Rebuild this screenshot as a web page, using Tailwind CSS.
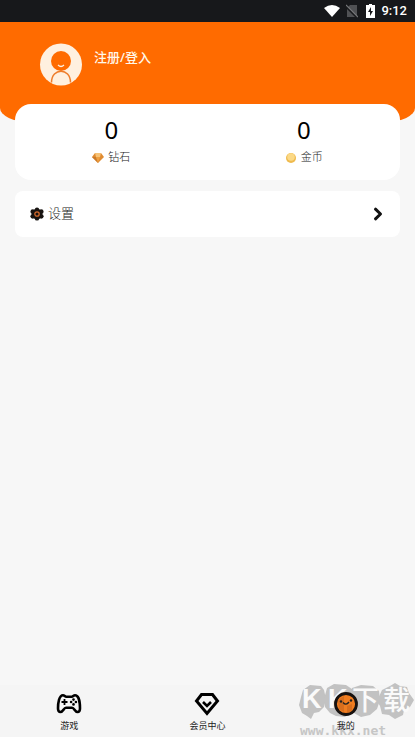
<!DOCTYPE html>
<html lang="zh-CN">
<head>
<meta charset="utf-8">
<meta name="viewport" content="width=device-width, initial-scale=1">
<title>我的</title>
<script src="https://cdn.jsdelivr.net/npm/@tailwindcss/browser@4"></script>
</head>
<body class="min-h-screen flex flex-col bg-[#f7f7f7] font-['Roboto','Noto_Sans_CJK_SC',sans-serif] text-[#222]">
<div class="h-[22px] bg-[#17181b] flex items-center justify-end gap-1.5 pr-2 text-white">
  <svg class="w-4 h-3" viewBox="0 0 16 12"><path fill="#fff" d="M0 3Q8-3 16 3L8 12Z"/></svg>
  <svg class="w-3 h-[14px] mr-0.5" viewBox="0 0 12 14"><path fill="#505154" d="M4 1h7v11L2 3ZM1 5l8 8H1Z"/><path stroke="#77787a" stroke-width="1.2" d="M0 1l12 12"/></svg>
  <svg class="w-[9px] h-[14px]" viewBox="0 0 9 14"><path fill="#fff" d="M3 0h3v1h3v13H0V1h3Z"/><path fill="#17181b" d="M5 3L2 8h2v4l3-5H5Z"/></svg>
  <span class="text-[13px] leading-5 font-medium">9:12</span>
</div>
<header class="bg-[#ff6b00] [border-radius:0_0_30px_30px/0_0_14px_14px] h-[100px] pl-[39px] pt-[21px] flex items-start gap-3">
  <svg class="w-[43px] h-[43px]" viewBox="0 0 43 43"><circle cx="22" cy="21.5" r="21" fill="#fff0df"/><circle cx="22" cy="18" r="10" fill="#ff6b00"/><path d="M12.500 39.500c0-15 19-15 19 0" fill="#fff0df" stroke="#ee7d2b" stroke-width="1.500"/><path d="M19 22q3 3 6 0" fill="none" stroke="#fff0df" stroke-width="1.200"/></svg>
  <a href="#" class="font-['Noto_Sans','Noto_Sans_CJK_SC',sans-serif] text-[13px] leading-5 font-medium text-[#fff8ea] mt-1">注册/登入</a>
</header>
<main class="flex-1 px-[15px] -mt-[18px]">
  <section class="h-[76px] bg-white rounded-2xl grid grid-cols-2 text-center pt-3">
    <div><div class="font-['Noto_Sans'] text-2xl leading-7 text-black">0</div>
      <div class="flex items-center justify-center gap-1 mt-1 text-[11px] leading-5 font-light"><svg class="w-3 h-3" viewBox="0 0 12 12"><path fill="#e08b30" d="M3 1h6l3 4-6 6L0 5Z"/><path fill="#f6c276" d="M3 1h6L8 5H4Z"/><path fill="#c87a2c" d="M0 5h4l2 6Z"/><path fill="#efa040" d="M4 5h4l-2 6Z"/></svg>钻石</div></div>
    <div><div class="font-['Noto_Sans'] text-2xl leading-7 text-black">0</div>
      <div class="flex items-center justify-center gap-1 mt-1 text-[11px] leading-5 font-light"><svg class="w-3 h-3" viewBox="0 0 12 12"><circle cx="6" cy="6" r="5" fill="#efba4d"/><circle cx="6" cy="5" r="3.800" fill="#fbd987"/></svg>金币</div></div>
  </section>
  <button class="mt-[11px] h-[46px] w-full bg-white rounded-lg flex items-center px-[15px] text-[13px] font-light">
    <svg class="w-[14px] h-[14px] mr-1" viewBox="0 0 14 14"><g fill="#181411"><circle cx="7" cy="7" r="5.200"/><circle cx="7" cy="2.600" r="2.200"/><circle cx="7" cy="11.400" r="2.200"/><circle cx="2.800" cy="4.700" r="2.400"/><circle cx="11.200" cy="4.700" r="2.400"/><circle cx="2.800" cy="9.300" r="2.400"/><circle cx="11.200" cy="9.300" r="2.400"/></g><circle cx="7" cy="7" r="2.200" fill="none" stroke="#d56a2b" stroke-width="1.300"/></svg>
    <span>设置</span>
    <svg class="w-[14px] h-[14px] ml-auto" viewBox="0 0 14 14"><path d="M4.500 2.200L9.500 7l-5 4.800" fill="none" stroke="#111" stroke-width="3" stroke-linecap="round" stroke-linejoin="round"/></svg>
  </button>
</main>
<div class="relative bg-[#f5f5f5]">
<nav class="h-[52px] grid grid-cols-3 text-[9px] leading-3 text-center">
  <a href="#" class="flex flex-col items-center pt-[7px]"><svg class="w-[26px] h-6" viewBox="0 0 26 24"><path d="M7 3.200c1.500 0 2 1.500 3.200 1.500h5.600c1.200 0 1.700-1.500 3.200-1.500 4 0 5 8 5 13 0 5-3.500 4.500-5.500 1.500-1-1.500-1.500-2-2.500-2h-6c-1 0-1.500 .5-2.500 2-2 3-5.500 3.500-5.500-1.500 0-5 1-13 5-13Z" fill="none" stroke="#000" stroke-width="2.600"/><path d="M5.500 10h6M8.500 7v6" stroke="#000" stroke-width="1.800"/><g fill="#000"><circle cx="17.500" cy="7.600" r="1.300"/><circle cx="17.500" cy="12.400" r="1.300"/><circle cx="15.100" cy="10" r="1.300"/><circle cx="19.900" cy="10" r="1.300"/></g></svg><span class="mt-1">游戏</span></a>
  <a href="#" class="flex flex-col items-center pt-[7px]"><svg class="w-[26px] h-6" viewBox="0 0 26 24"><path d="M7.500 2.500h11L23.500 9 13 21.500 2.500 9Z" fill="none" stroke="#000" stroke-width="3"/><path d="M9 10l4 4 4-4" fill="none" stroke="#000" stroke-width="2.600"/></svg><span class="mt-1">会员中心</span></a>
  <a href="#" class="flex flex-col items-center pt-[7px]"><svg class="relative z-10 w-[26px] h-6" viewBox="0 0 26 24"><circle cx="13" cy="12" r="10.500" fill="#f07d20" stroke="#171210" stroke-width="2.800"/><path d="M5 8l6-4v16l-5-3Z" fill="#c8641c" fill-opacity=".6"/><path d="M14 14l5-2v7l-5 2Z" fill="#c8641c" fill-opacity=".6"/><circle cx="8" cy="9.500" r="1.200" fill="#222"/><circle cx="18" cy="8.500" r="1.200" fill="#222"/><path d="M10 10.500q3 3.500 6-.5" fill="none" stroke="#222" stroke-width="1.400"/></svg><span class="relative z-10 mt-1">我的</span></a>
</nav>
<div class="absolute right-0 bottom-0 w-[117px] h-[57px] pointer-events-none" aria-hidden="true">
  <svg class="w-full h-full" viewBox="0 0 117 57"><g fill="#c2c2c2"><path d="M5 10l7-5 11 1 3 4 2 9-2 8-5 5-5 1-3 6-4-3-5-3-3-8 2-8Z"/><path d="M29 8l7-4 12 1 6 4v22l-7 6-9-1-6-3-5-6-1-8Z"/><path d="M54 8l9-3 12 1 6 5 1 9-3 9-7 6-9 2-7-4-3-8Z"/><path d="M84 10l8-4 5-3 5 3 7 1 2 6 5 7-4 7-6 3-1 5-8 4-6-4-7-1-2-8-3-5Z"/></g>
  <g fill="#fafafa" font-family="Liberation Sans, Noto Sans CJK SC, sans-serif"><text x="4" y="28" font-size="27" font-weight="700">K</text><text x="30" y="28" font-size="27" font-weight="700">K</text><text x="54" y="30" font-size="27" font-weight="500">下</text><text x="85" y="30" font-size="27" font-weight="500">载</text></g>
  <text x="2" y="55" fill="#c6c6c6" font-family="DejaVu Sans Mono, monospace" font-size="13" font-weight="700">www.kkx.net</text></svg>
</div>
</div>
</body>
</html>
